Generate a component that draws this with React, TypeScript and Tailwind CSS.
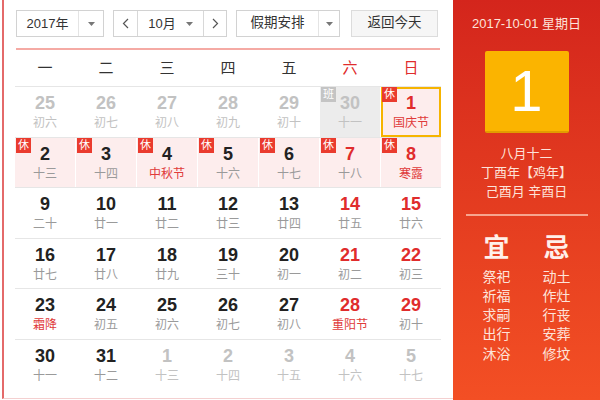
import React from "react";

type Cell = {
  d: string;
  l: string;
  kind?: "other" | "cur";
  weekend?: boolean;
  fest?: boolean;
  badge?: "休" | "班";
  holiday?: boolean;
  selected?: boolean;
  work?: boolean;
};

const rows: Cell[][] = [
  [
    { d: "25", l: "初六", kind: "other" },
    { d: "26", l: "初七", kind: "other" },
    { d: "27", l: "初八", kind: "other" },
    { d: "28", l: "初九", kind: "other" },
    { d: "29", l: "初十", kind: "other" },
    { d: "30", l: "十一", kind: "other", badge: "班", work: true },
    { d: "1", l: "国庆节", weekend: true, fest: true, badge: "休", holiday: true, selected: true },
  ],
  [
    { d: "2", l: "十三", badge: "休", holiday: true },
    { d: "3", l: "十四", badge: "休", holiday: true },
    { d: "4", l: "中秋节", fest: true, badge: "休", holiday: true },
    { d: "5", l: "十六", badge: "休", holiday: true },
    { d: "6", l: "十七", badge: "休", holiday: true },
    { d: "7", l: "十八", weekend: true, badge: "休", holiday: true },
    { d: "8", l: "寒露", weekend: true, fest: true, badge: "休", holiday: true },
  ],
  [
    { d: "9", l: "二十" },
    { d: "10", l: "廿一" },
    { d: "11", l: "廿二" },
    { d: "12", l: "廿三" },
    { d: "13", l: "廿四" },
    { d: "14", l: "廿五", weekend: true },
    { d: "15", l: "廿六", weekend: true },
  ],
  [
    { d: "16", l: "廿七" },
    { d: "17", l: "廿八" },
    { d: "18", l: "廿九" },
    { d: "19", l: "三十" },
    { d: "20", l: "初一" },
    { d: "21", l: "初二", weekend: true },
    { d: "22", l: "初三", weekend: true },
  ],
  [
    { d: "23", l: "霜降", fest: true },
    { d: "24", l: "初五" },
    { d: "25", l: "初六" },
    { d: "26", l: "初七" },
    { d: "27", l: "初八" },
    { d: "28", l: "重阳节", weekend: true, fest: true },
    { d: "29", l: "初十", weekend: true },
  ],
  [
    { d: "30", l: "十一" },
    { d: "31", l: "十二" },
    { d: "1", l: "十三", kind: "other" },
    { d: "2", l: "十四", kind: "other" },
    { d: "3", l: "十五", kind: "other" },
    { d: "4", l: "十六", kind: "other" },
    { d: "5", l: "十七", kind: "other" },
  ],
];

const Tri = () => (
  <svg width="7" height="4" viewBox="0 0 7 4">
    <path d="M0 0 L7 0 L3.5 4 Z" fill="#777" />
  </svg>
);

const Chev = ({ dir }: { dir: "l" | "r" }) => (
  <svg width="7" height="11" viewBox="0 0 7 11">
    <path
      d={dir === "l" ? "M6 1 L1.5 5.5 L6 10" : "M1 1 L5.5 5.5 L1 10"}
      fill="none"
      stroke="#555"
      strokeWidth="1.2"
    />
  </svg>
);

function DayCell({ c }: { c: Cell }) {
  const other = c.kind === "other";
  let bg = "";
  if (c.work) bg = "bg-[#ececec]";
  else if (c.holiday) bg = "bg-[#fdeded]";
  const numColor = other
    ? "text-[#c2c2c2]"
    : c.weekend
    ? "text-[#e02c2c]"
    : "text-[#222222]";
  const lunColor = other
    ? "text-[#c2c2c2]"
    : c.fest
    ? "text-[#e03a3a]"
    : "text-[#9a9a9a]";
  return (
    <div
      className={`relative flex flex-col items-center h-full ${bg} ${
        c.selected ? "border-2 border-[#f6b400] pt-[4px]" : "pt-[6px]"
      }`}
    >
      {c.badge && (
        <div
          className={`absolute ${
            c.selected ? "top-[-2px] left-[-1px]" : "top-0 left-[1px]"
          } w-[15px] h-[15px] text-[11px] leading-[15px] text-center text-white ${
            c.badge === "休" ? "bg-[#ea3b2e]" : "bg-[#c4c4c4]"
          }`}
        >
          {c.badge}
        </div>
      )}
      <div className={`text-[18px] leading-[20px] font-bold ${numColor}`}>{c.d}</div>
      <div className={`mt-[2px] text-[12px] leading-[16px] ${lunColor}`}>{c.l}</div>
    </div>
  );
}

export default function App() {
  const weekdays = ["一", "二", "三", "四", "五", "六", "日"];
  const yi = ["祭祀", "祈福", "求嗣", "出行", "沐浴"];
  const ji = ["动土", "作灶", "行丧", "安葬", "修坟"];
  return (
    <div className="w-[600px] h-[400px] flex bg-white font-['Liberation_Sans','Noto_Sans_CJK_SC',sans-serif] overflow-hidden">
      {/* left calendar */}
      <div className="ml-[2px] w-[451px] h-[399px] border-l-2 border-b border-l-[#e46a6a] border-b-[#f4d0d0] pl-[11px] pt-[10px]">
        {/* controls */}
        <div className="ml-[1px] flex h-[27px] text-[13px] text-[#333]">
          <div className="w-[88px] h-full border border-[#d2d2d2] flex items-center">
            <div className="w-[61px] text-center">2017年</div>
            <div className="h-full w-[1px] bg-[#e4e4e4]" />
            <div className="flex-1 flex items-center justify-center">
              <Tri />
            </div>
          </div>
          <div className="ml-[9px] w-[114px] h-full border border-[#d2d2d2] flex items-center">
            <div className="w-[23px] h-full flex items-center justify-center">
              <Chev dir="l" />
            </div>
            <div className="h-full w-[1px] bg-[#d8d8d8]" />
            <div className="w-[65px] h-full flex items-center justify-center gap-[10px]">
              <span>10月</span>
              <Tri />
            </div>
            <div className="h-full w-[1px] bg-[#d8d8d8]" />
            <div className="flex-1 h-full flex items-center justify-center">
              <Chev dir="r" />
            </div>
          </div>
          <div className="ml-[9px] w-[104px] h-full border border-[#d2d2d2] flex items-center">
            <div className="w-[81px] text-center text-[13.5px]">假期安排</div>
            <div className="h-full w-[1px] bg-[#e4e4e4]" />
            <div className="flex-1 flex items-center justify-center">
              <Tri />
            </div>
          </div>
          <div className="ml-[11px] w-[87px] h-full border border-[#dcdcdc] bg-[#f6f6f6] flex items-center justify-center text-[13.5px]">
            返回今天
          </div>
        </div>
        {/* red line */}
        <div className="mt-[11px] ml-[1px] w-[424px] h-[2px] bg-[#f5aaa4]" />
        {/* weekday header */}
        <div className="grid grid-cols-[repeat(7,60px)] gap-x-[1px] h-[37px] border-b border-[#e6e6e6] w-[426px] items-center">
          {weekdays.map((w, i) => (
            <div
              key={w}
              className={`text-center text-[15px] ${i >= 5 ? "text-[#e02c2c]" : "text-[#333]"}`}
            >
              {w}
            </div>
          ))}
        </div>
        {/* day rows */}
        {rows.map((r, ri) => (
          <div
            key={ri}
            className={`grid grid-cols-[repeat(7,60px)] gap-x-[1px] w-[426px] h-[50.5px] ${
              ri < rows.length - 1 ? "border-b border-[#e6e6e6]" : ""
            }`}
          >
            {r.map((c, ci) => (
              <DayCell key={ci} c={c} />
            ))}
          </div>
        ))}
      </div>
      {/* right panel */}
      <div className="w-[147px] h-[400px] bg-gradient-to-b from-[#d4251c] to-[#f34f24] flex flex-col items-center text-[#fde3da]">
        <div className="mt-[15px] text-[13px] leading-[18px] whitespace-nowrap">2017-10-01 星期日</div>
        <div className="mt-[18px] w-[84px] h-[82px] bg-[#fbb400] border-b-2 border-[#e29c00] rounded-[2px] flex items-center justify-center text-white text-[58px] leading-none">
          1
        </div>
        <div className="mt-[11px] text-[13px] leading-[19px] text-center">
          <div>八月十二</div>
          <div>丁酉年【鸡年】</div>
          <div>己酉月 辛酉日</div>
        </div>
        <div className="mt-[13px] w-[122px] h-[1.5px] bg-[#f7a58f]" />
        <div className="mt-[17px] w-[120px] grid grid-cols-2 text-center">
          <div className="text-[26px] leading-[30px] font-bold text-[#fff0ea]">宜</div>
          <div className="text-[26px] leading-[30px] font-bold text-[#fff0ea]">忌</div>
          <div className="mt-[5px] text-[14px] leading-[19.3px]">
            {yi.map((t) => (
              <div key={t}>{t}</div>
            ))}
          </div>
          <div className="mt-[5px] text-[14px] leading-[19.3px]">
            {ji.map((t) => (
              <div key={t}>{t}</div>
            ))}
          </div>
        </div>
      </div>
    </div>
  );
}
